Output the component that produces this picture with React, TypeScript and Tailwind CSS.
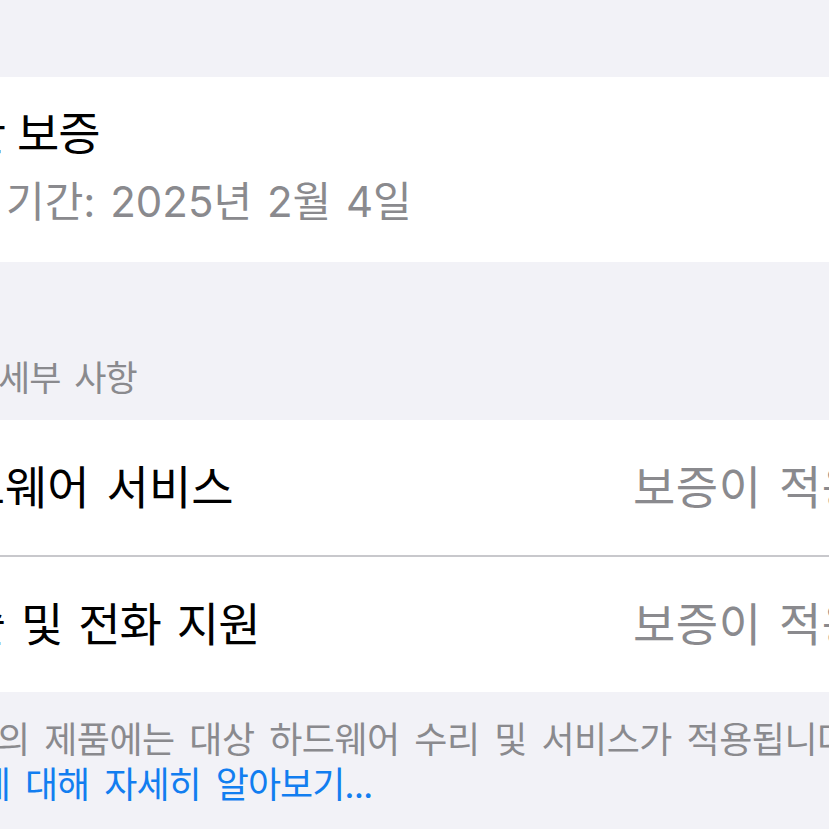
import React from 'react';

const font = { fontFamily: 'Inter, "Noto Sans CJK KR", sans-serif' };

// Text whose start lies left of the visible frame: the prefix spills out to the left.
const Clipped: React.FC<{ prefix: string; text: string; className?: string }> = ({ prefix, text, className }) => (
  <div className={`flex whitespace-nowrap ${className ?? ''}`}>
    <span className="flex w-0 shrink-0 justify-end">{prefix}</span>
    <span>{text}</span>
  </div>
);

const Row: React.FC<{ prefix: string; label: string; pad: string; spacing: string; value: string }> = ({
  prefix,
  label,
  pad,
  spacing,
  value,
}) => (
  <div className="flex h-[135px] items-center whitespace-nowrap text-[46px]">
    <div className={`w-[633px] shrink-0 ${pad}`}>
      <Clipped prefix={prefix} text={label} className={`text-black ${spacing}`} />
    </div>
    <span className="tracking-[0.5px] text-[#8a8a8e] [word-spacing:4px]">{value}</span>
  </div>
);

export default function App() {
  return (
    <div className="h-[829px] w-[829px] overflow-hidden bg-[#f2f2f7]" style={font}>
      <div className="h-[77px]" />

      <div className="flex h-[185px] flex-col bg-white pt-[28px]">
        <Clipped
          prefix={'제한\u00a0'}
          text="보증"
          className="pl-[17px] text-[46px] leading-[56px] tracking-[-1px] text-black"
        />
        <Clipped
          prefix={'만료\u00a0'}
          text="기간: 2025년 2월 4일"
          className="mt-[16px] pl-[6px] text-[42px] leading-[50px] text-[#8a8a8e] [word-spacing:3px]"
        />
      </div>

      <div className="flex h-[158px] items-end pb-[20px]">
        <Clipped
          prefix={'보증\u00a0'}
          text="세부 사항"
          className="-ml-[2px] text-[35px] leading-[44px] tracking-[-1px] text-[#8a8a8e] [word-spacing:5px]"
        />
      </div>

      <div className="bg-white">
        <Row
          prefix="하드"
          label="웨어 서비스"
          pad="pl-[5px]"
          spacing="[word-spacing:4px]"
          value="보증이 적용됨"
        />
        <div className="h-[1.5px] bg-[#c8c8cc]" />
        <Row
          prefix={'기술\u00a0'}
          label="및 전화 지원"
          pad="pl-[21px]"
          spacing="tracking-[-1px] [word-spacing:4px]"
          value="보증이 적용됨"
        />
      </div>

      <div className="pt-[26px] text-[36px] leading-[45px] tracking-[-0.5px] [word-spacing:5px]">
        <Clipped
          prefix="고객님"
          text="의 제품에는 대상 하드웨어 수리 및 서비스가 적용됩니다."
          className="-ml-[3px] text-[#8a8a8e]"
        />
        <Clipped
          prefix={'보증에\u00a0'}
          text="대해 자세히 알아보기..."
          className="pl-[25px] tracking-[-1px] text-[#127ef0] [word-spacing:6px]"
        />
      </div>
    </div>
  );
}
